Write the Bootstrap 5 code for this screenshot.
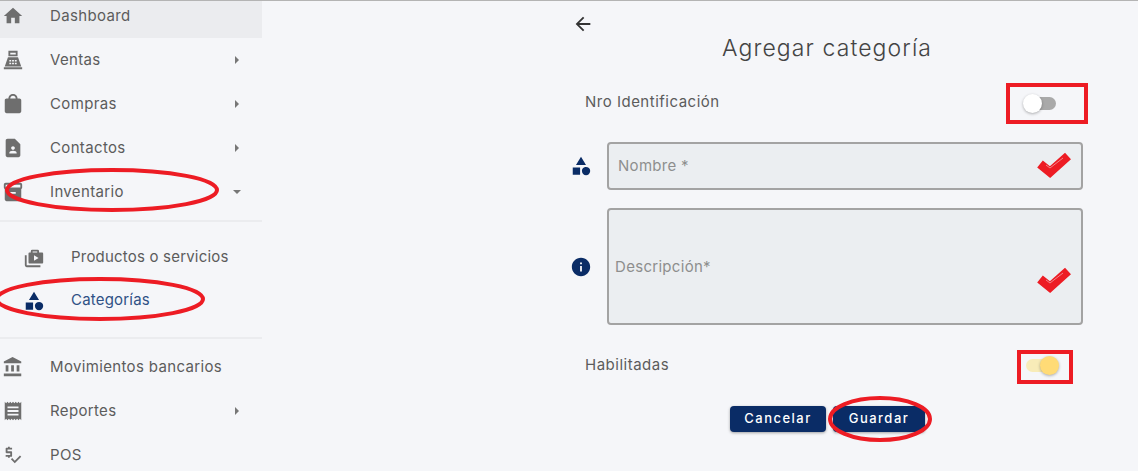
<!DOCTYPE html>
<html lang="es">
<head>
  <meta charset="UTF-8" />
  <meta name="viewport" content="width=device-width, initial-scale=1.0"/>
  <title>Agregar categoría</title>
  <link href="https://cdn.jsdelivr.net/npm/bootstrap@5.3.0/dist/css/bootstrap.min.css" rel="stylesheet"/>
  <style>
    html, body { height: 471px; overflow: hidden; }
    body {
      background-color: #f5f6f9; color: #5c5c5c;
      font-family: Inter, "Open Sans", sans-serif; font-size: 15px;
      border-top: 1px solid #b4b4b4; position: relative;
    }
    .side-menu { width: 262px; margin-top: -8px; flex: none; }
    .menu-row { height: 44px; padding-left: 2px; padding-right: 21px; letter-spacing: .35px; }
    .menu-row.is-active { background-color: #ebecef; height: 45px; padding-top: 1px; }
    .menu-row svg.menu-ic { width: 22px; height: 22px; fill: #6e6e6e; margin-right: 26px; flex: none; }
    .menu-sub { padding-left: 23px; height: 43px; letter-spacing: .2px; }
    .menu-sub svg.menu-ic { width: 22px; height: 22px; }
    .menu-sub.is-current { color: #2f5185; }
    .menu-sub.is-current svg.menu-ic { fill: #0a2c66; }
    .caret-r { width: 0; height: 0; border-left: 4px solid #777; border-top: 4px solid transparent; border-bottom: 4px solid transparent; margin-left: auto; margin-right: 2px; }
    .caret-d { width: 0; height: 0; border-top: 4px solid #777; border-left: 4px solid transparent; border-right: 4px solid transparent; margin-left: auto; }
    .menu-sep { height: 2px; background-color: #ebecef; }
    .sep-first { margin-top: 6px; margin-bottom: 14px; }
    .sep-second { margin-top: 15px; margin-bottom: 6px; }
    .form-pane { width: 509px; margin-left: 311px; flex: none; }
    .back-ic { width: 22px; height: 22px; fill: #333; display: block; margin: 12px 0 0 -1px; }
    .form-title { font-size: 23px; font-weight: 300; color: #444; letter-spacing: 1.1px; margin: 0; padding-left: 149px; line-height: 27px; }
    .switch-row { padding-left: 12px; letter-spacing: .5px; }
    .row-nro { margin-top: 21px; }
    .row-nro > span { margin-bottom: 2px; }
    .row-hab { margin-top: 25px; }
    .row-hab > span { margin-bottom: 4px; }
    .red-box { border: 4px solid #ed1c24; display: flex; align-items: center; flex: none; }
    .box-off { width: 82px; height: 41px; margin-right: -6px; padding-left: 14px; }
    .box-on { width: 56px; height: 34px; margin-right: 9px; padding-left: 5px; padding-bottom: 4px; }
    .sw-track { width: 32px; height: 13px; border-radius: 7px; position: relative; display: block; }
    .sw-off { background-color: #a9a9a9; }
    .sw-on { background-color: #f8ecb8; width: 30px; }
    .sw-knob { width: 19px; height: 19px; border-radius: 50%; position: absolute; top: -3px; box-shadow: 0 1px 3px rgba(0,0,0,.3); }
    .sw-off .sw-knob { left: -1px; background-color: #fff; }
    .sw-on .sw-knob { right: -3px; background-color: #ffdb76; }
    .field-row { gap: 15px; }
    .field-name { margin-top: 18px; }
    .field-desc { margin-top: 18px; }
    .field-ic { width: 22px; height: 22px; fill: #0a2c66; flex: none; margin-left: -3px; }
    .field-box { position: relative; flex: 1; margin-right: -1px; }
    .field-box .form-control {
      background-color: #ebeef1; border: 2px solid #a3a3a3; border-radius: 4px;
      color: #555; font-size: 15px; letter-spacing: .3px; resize: none; box-shadow: none; display: block;
    }
    .field-box .form-control::placeholder { color: #8e8e8e; opacity: 1; }
    .field-name .form-control { height: 48px; padding: 0 0 2px 9px; }
    .field-desc .form-control { height: 117px; padding: 46px 6px 0; }
    .tick { position: absolute; right: 11px; width: 36px; height: 26px; }
    .field-name .tick { top: 10px; }
    .field-desc .tick { top: 59px; }
    .form-actions { padding-left: 157px; margin-top: 22px; gap: 7px; }
    .btn-navy {
      background-color: #0a2c66; color: #fff; font-size: 13px; font-weight: 500; letter-spacing: 1.5px;
      height: 26px; width: 96px; padding: 0; border-radius: 4px; border: 0;
      box-shadow: 0 1px 3px rgba(0,0,0,.35);
    }
    .btn-navy:hover { background-color: #0a2c66; color: #fff; }
    .btn-navy.narrow { width: 92px; }
    .marks { position: absolute; left: 0; top: -1px; width: 1138px; height: 471px; pointer-events: none; }
  </style>
</head>
<body>
  <div class="d-flex">
    <nav class="side-menu">
      <div class="menu-row is-active d-flex align-items-center">
        <svg class="menu-ic" viewBox="0 0 24 24"><path d="M10 20v-6h4v6h5v-8h3L12 3 2 12h3v8z"/></svg>Dashboard
      </div>
      <div class="menu-row d-flex align-items-center">
        <svg class="menu-ic" viewBox="0 0 24 24"><path d="M7 2h10v6H7zM9 4v2h6V4zM2 20h20v2H2zM6.500 9h11L21 19H3zM8 12v1.500h2V12zm3 0v1.500h2V12zm3 0v1.500h2V12zm-6 3v1.500h2V15zm3 0v1.500h2V15zm3 0v1.500h2V15z" fill-rule="evenodd"/></svg>Ventas<span class="caret-r"></span>
      </div>
      <div class="menu-row d-flex align-items-center">
        <svg class="menu-ic" viewBox="0 0 24 24"><path d="M19 6h-2c0-2.760-2.240-5-5-5S7 3.240 7 6H5c-1.100 0-1.990.9-1.990 2L3 20c0 1.100.9 2 2 2h14c1.100 0 2-.9 2-2V8c0-1.100-.9-2-2-2zm-7-3c1.660 0 3 1.340 3 3H9c0-1.660 1.340-3 3-3z"/></svg>Compras<span class="caret-r"></span>
      </div>
      <div class="menu-row d-flex align-items-center">
        <svg class="menu-ic" viewBox="0 0 24 24"><path d="M14 2H6c-1.100 0-1.990.9-1.990 2L4 20c0 1.100.89 2 1.990 2H18c1.100 0 2-.9 2-2V8l-6-6zm-2 8c1.100 0 2 .9 2 2s-.9 2-2 2-2-.9-2-2 .9-2 2-2zm4 8H8v-.57c0-.81.48-1.530 1.220-1.850.85-.37 1.790-.58 2.780-.58s1.930.21 2.780.58c.74.32 1.220 1.040 1.220 1.850V18z"/></svg>Contactos<span class="caret-r"></span>
      </div>
      <div class="menu-row d-flex align-items-center">
        <svg class="menu-ic" viewBox="0 0 24 24"><path d="M20 2H4c-1 0-2 .9-2 2v3.010c0 .72.43 1.340 1 1.690V20c0 1.100 1.100 2 2 2h14c.9 0 2-.9 2-2V8.700c.57-.35 1-.97 1-1.690V4c0-1.100-1-2-2-2zm-5 12H9v-2h6v2zm5-7H4V4l16-.02V7z"/></svg>Inventario<span class="caret-d"></span>
      </div>
      <div class="menu-sep sep-first"></div>
      <div class="menu-row menu-sub d-flex align-items-center">
        <svg class="menu-ic" viewBox="0 0 24 24"><path d="M10 3h6a1.500 1.500 0 0 1 1.500 1.500V6H21a1 1 0 0 1 1 1v10a1 1 0 0 1-1 1H7a1 1 0 0 1-1-1V7a1 1 0 0 1 1-1h1.500V4.500A1.500 1.500 0 0 1 10 3zm.5 1.800V6h5V4.800zM12 9v6l5-3zM2 9h2v11h15v2H4a2 2 0 0 1-2-2z" fill-rule="evenodd"/></svg>Productos o servicios
      </div>
      <div class="menu-row menu-sub is-current d-flex align-items-center">
        <svg class="menu-ic" viewBox="0 0 24 24"><path d="M12 2l-5.500 9h11zM3 13.500h8v8H3z"/><circle cx="17.500" cy="17.500" r="4.500"/></svg>Categorías
      </div>
      <div class="menu-sep sep-second"></div>
      <div class="menu-row d-flex align-items-center">
        <svg class="menu-ic" viewBox="0 0 24 24"><path d="M4 10v7h3v-7H4zm6 0v7h3v-7h-3zM2 22h19v-3H2v3zm14-12v7h3v-7h-3zm-4.500-9L2 6v2h19V6l-9.500-5z"/></svg>Movimientos bancarios
      </div>
      <div class="menu-row d-flex align-items-center">
        <svg class="menu-ic" viewBox="0 0 24 24"><path d="M18 17H6v-2h12v2zm0-4H6v-2h12v2zm0-4H6V7h12v2zM3 22l1.500-1.500L6 22l1.500-1.500L9 22l1.500-1.500L12 22l1.500-1.500L15 22l1.500-1.500L18 22l1.500-1.500L21 22V2l-1.500 1.500L18 2l-1.500 1.500L15 2l-1.500 1.500L12 2l-1.500 1.500L9 2 7.500 3.500 6 2 4.500 3.500 3 2v20z"/></svg>Reportes<span class="caret-r"></span>
      </div>
      <div class="menu-row d-flex align-items-center">
        <svg class="menu-ic" viewBox="0 0 24 24"><path d="M11 13V9c0-.55-.45-1-1-1H6V6h5V4H8.500V3h-2v1H5c-.55 0-1 .45-1 1v4c0 .55.45 1 1 1h4v2H4v2h2.500v1h2v-1H10c.55 0 1-.45 1-1zm8.590-.48l-5.660 5.650-2.830-2.830-1.410 1.420L13.930 21 21 13.930z"/></svg>POS
      </div>
    </nav>

    <main class="form-pane">
      <svg class="back-ic" viewBox="0 0 24 24"><path d="M20 11H7.830l5.590-5.590L12 4l-8 8 8 8 1.410-1.410L7.830 13H20v-2z"/></svg>
      <h1 class="form-title">Agregar categoría</h1>
      <div class="switch-row row-nro d-flex justify-content-between align-items-center">
        <span>Nro Identificación</span>
        <div class="red-box box-off"><span class="sw-track sw-off"><span class="sw-knob"></span></span></div>
      </div>
      <div class="field-row field-name d-flex align-items-center">
        <svg class="field-ic" viewBox="0 0 24 24"><path d="M12 2l-5.500 9h11zM3 13.500h8v8H3z"/><circle cx="17.500" cy="17.500" r="4.500"/></svg>
        <div class="field-box">
          <input class="form-control" type="text" placeholder="Nombre *"/>
          <svg class="tick" viewBox="0 0 36 26"><path d="M4 12l10 8L32 4" fill="none" stroke="#ed1c24" stroke-width="9"/><path d="M10 13l4 3L27 6" fill="none" stroke="#f2858a" stroke-width="1"/></svg>
        </div>
      </div>
      <div class="field-row field-desc d-flex align-items-center">
        <svg class="field-ic" viewBox="0 0 24 24"><path d="M12 2C6.480 2 2 6.480 2 12s4.480 10 10 10 10-4.480 10-10S17.520 2 12 2zm1 15h-2v-6h2v6zm0-8h-2V7h2v2z"/></svg>
        <div class="field-box">
          <textarea class="form-control" placeholder="Descripción*"></textarea>
          <svg class="tick" viewBox="0 0 36 26"><path d="M4 12l10 8L32 4" fill="none" stroke="#ed1c24" stroke-width="9"/><path d="M10 13l4 3L27 6" fill="none" stroke="#f2858a" stroke-width="1"/></svg>
        </div>
      </div>
      <div class="switch-row row-hab d-flex justify-content-between align-items-center">
        <span>Habilitadas</span>
        <div class="red-box box-on"><span class="sw-track sw-on"><span class="sw-knob"></span></span></div>
      </div>
      <div class="form-actions d-flex">
        <button class="btn btn-navy" type="button">Cancelar</button>
        <button class="btn btn-navy narrow" type="button">Guardar</button>
      </div>
    </main>
  </div>

  <!-- hand drawn highlights over the page -->
  <svg class="marks" viewBox="0 0 1138 471" fill="none" stroke="#ed1c24" stroke-width="4">
    <ellipse cx="112" cy="190" rx="105" ry="20"/>
    <ellipse cx="100" cy="299" rx="103" ry="20"/>
    <ellipse cx="880" cy="419" rx="50" ry="21"/>
  </svg>
</body>
</html>
